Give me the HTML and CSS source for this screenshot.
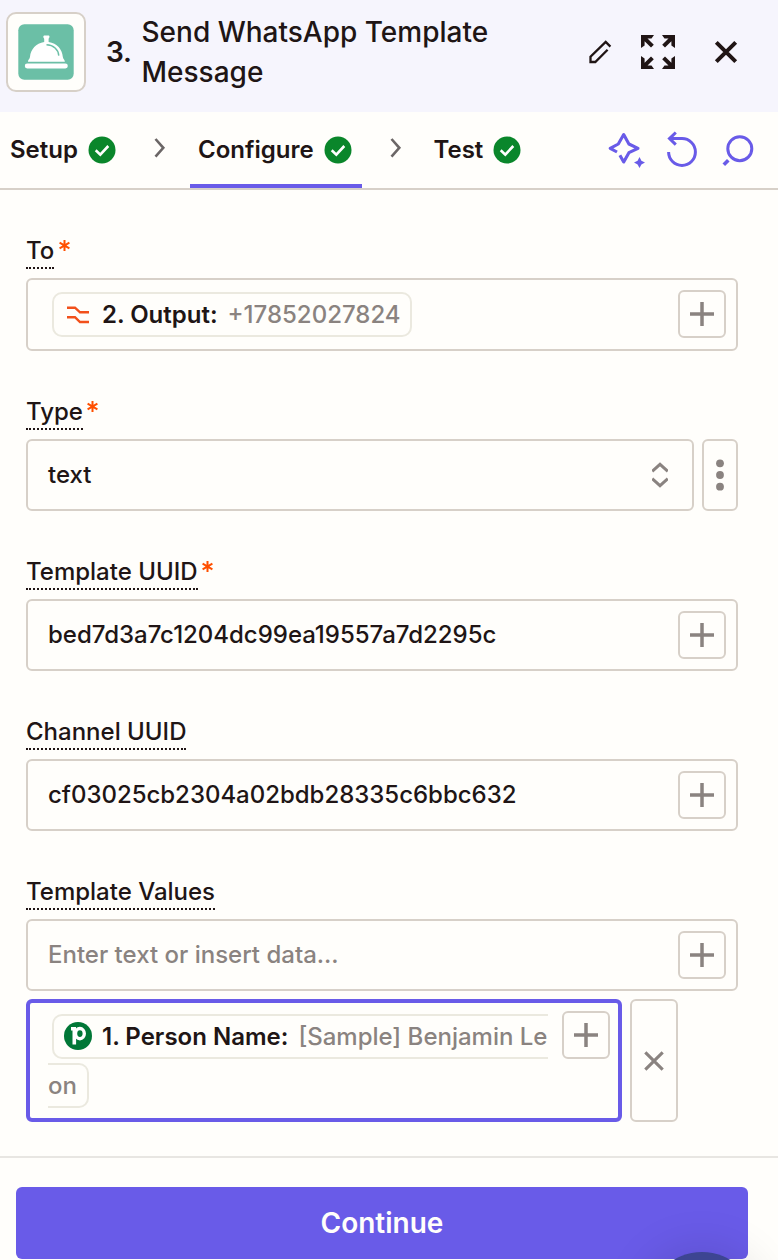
FILE: index.html
```html
<!DOCTYPE html>
<html lang="en">
<head>
<meta charset="utf-8">
<title>Send WhatsApp Template Message</title>
<link rel="stylesheet" href="styles.css">
</head>
<body>
<div class="panel">
  <header class="header">
    <div class="app-icon">
      <svg width="56" height="56" viewBox="0 0 56 56"><rect x="0.3" y="0.3" width="55.4" height="55.4" rx="6" fill="#6bbfa6"/><path fill="#fff" d="M25.300 12.800c0-.8.7-1.200 1.300-1.200h3.600c.8 0 1.300.5 1.300 1.200 0 1-.9 1.400-.9 2.200v3c8.500 1.200 13.600 7.500 14.200 14.800.2 2.300 1.900 2.700 2.100 5h-37c.2-2.300 1.900-2.700 2.100-5 .7-7.300 6-13.600 14.200-14.800v-3c0-.8-.9-1.200-.9-2.200z"/><path d="M28.500 20.800c7 .3 11.800 4.500 12.300 10.800" fill="none" stroke="#6bbfa6" stroke-width="1.500"/><rect x="6.800" y="39.600" width="43" height="4.800" rx="2.400" fill="#fff"/></svg>
    </div>
    <span class="step">3.</span>
    <h1 class="title">Send WhatsApp Template<br>Message</h1>
    <div class="header-actions">
      <svg width="24" height="24" viewBox="0 0 24 24" fill="none" stroke="#201515" stroke-width="2.300"><path d="M22.400 6.600 17.700 1.900 2.500 16.800V22H7.300L19.600 9.800"/></svg>
      <svg class="expand" width="36" height="36" viewBox="0 0 36 36" fill="#201515"><path d="M1 1H14L11.500 4.500H7.500L13.800 10.800 11 13.600 4.600 7.200V11.500L1 14Z"/><path transform="matrix(-1 0 0 1 36 0)" d="M1 1H14L11.500 4.500H7.500L13.800 10.800 11 13.600 4.600 7.200V11.500L1 14Z"/><path transform="matrix(1 0 0 -1 0 36)" d="M1 1H14L11.500 4.500H7.500L13.800 10.800 11 13.600 4.600 7.200V11.500L1 14Z"/><path transform="matrix(-1 0 0 -1 36 36)" d="M1 1H14L11.500 4.500H7.500L13.800 10.800 11 13.600 4.600 7.200V11.500L1 14Z"/></svg>
      <svg width="24" height="24" viewBox="0 0 24 24" fill="none" stroke="#201515" stroke-width="4"><path d="M2.300 2.300 21.700 21.700M21.700 2.300 2.300 21.700"/></svg>
    </div>
  </header>

  <nav class="tabs">
    <div class="tab setup"><span>Setup</span><svg width="28" height="28" viewBox="0 0 28 28"><circle cx="14" cy="14" r="13.500" fill="#0a862b"/><path d="M7.700 14.200 12.300 18.600 20.300 10" fill="none" stroke="#fff" stroke-width="2.600"/></svg></div>
    <svg class="chevron" width="12" height="20" viewBox="0 0 12 20"><path d="M1.500 1 9.300 9.800 1.500 18.600" fill="none" stroke="#6b6666" stroke-width="2.600"/></svg>
    <div class="tab active"><span>Configure</span><svg width="28" height="28" viewBox="0 0 28 28"><circle cx="14" cy="14" r="13.500" fill="#0a862b"/><path d="M7.700 14.200 12.300 18.600 20.300 10" fill="none" stroke="#fff" stroke-width="2.600"/></svg></div>
    <svg class="chevron" width="12" height="20" viewBox="0 0 12 20"><path d="M1.500 1 9.300 9.800 1.500 18.600" fill="none" stroke="#6b6666" stroke-width="2.600"/></svg>
    <div class="tab test"><span>Test</span><svg width="28" height="28" viewBox="0 0 28 28"><circle cx="14" cy="14" r="13.500" fill="#0a862b"/><path d="M7.700 14.200 12.300 18.600 20.300 10" fill="none" stroke="#fff" stroke-width="2.600"/></svg></div>
    <div class="tab-actions">
      <svg width="37" height="36" viewBox="0 0 37 36"><path d="M9 20 2.200 16.300 10.300 12 15.700 2.600 20.900 12 30 16.300 20.900 20.700 15.700 30 11.900 23.200" fill="none" stroke="#695be8" stroke-width="3.100" stroke-linejoin="round"/><path d="M31.500 25 33.400 28.700 37 30.600 33.400 32.400 31.500 36 29.600 32.400 26 30.600 29.600 28.700Z" fill="#695be8"/></svg>
      <svg class="undo" width="32" height="36" viewBox="0 0 32 36" fill="none" stroke="#695be8" stroke-width="3"><path d="M3.500 7.600H16A13.400 13.400 0 1 1 2.600 21"/><path d="M9.800 1.500 3.500 7.600 9.800 13.700"/></svg>
      <svg class="search" width="32" height="32" viewBox="0 0 32 32" fill="none" stroke="#695be8" stroke-width="3"><circle cx="17.800" cy="13.700" r="12"/><path d="M6.300 25.200 1.800 29.700" stroke-width="3.600"/></svg>
    </div>
  </nav>

  <main class="form">
    <section class="field">
      <div class="label-row"><label class="label">To</label><svg class="required" width="11" height="11" viewBox="0 0 11 11"><path d="M5.500 0V11M.6 2.700 10.400 8.300M10.400 2.700.6 8.300" stroke="#ff4f00" stroke-width="2"/></svg></div>
      <div class="box box-tall">
        <div class="pill pill-phone">
          <svg class="format" width="22" height="18" viewBox="0 0 22 18" fill="none" stroke="#f2501b" stroke-width="2.400"><path d="M0 1.700H8L13 6.300H22M0 11.200H8L13 16H22"/></svg>
          <b class="p-out">2. Output:</b><span>+17852027824</span>
        </div>
        <button class="add"><svg width="24" height="24" viewBox="0 0 24 24"><path d="M12 0V24M0 12H24" stroke="#8a8380" stroke-width="3.500"/></svg></button>
      </div>
    </section>

    <section class="field">
      <div class="label-row"><label class="label">Type</label><svg class="required" width="11" height="11" viewBox="0 0 11 11"><path d="M5.500 0V11M.6 2.700 10.400 8.300M10.400 2.700.6 8.300" stroke="#ff4f00" stroke-width="2"/></svg></div>
      <div class="row">
        <div class="box select"><span class="value">text</span>
          <svg width="16" height="26" viewBox="0 0 16 26" fill="none" stroke="#8a8380" stroke-width="2.900"><path d="M.2 9.300 8 2.300 15.800 9.300M.2 16.700 8 23.700 15.800 16.700"/></svg>
        </div>
        <button class="menu"><svg width="8" height="32" viewBox="0 0 8 32" fill="#8a8380"><circle cx="4" cy="4.300" r="3.900"/><circle cx="4" cy="16" r="3.900"/><circle cx="4" cy="27.700" r="3.900"/></svg></button>
      </div>
    </section>

    <section class="field">
      <div class="label-row"><label class="label">Template UUID</label><svg class="required" width="11" height="11" viewBox="0 0 11 11"><path d="M5.500 0V11M.6 2.700 10.400 8.300M10.400 2.700.6 8.300" stroke="#ff4f00" stroke-width="2"/></svg></div>
      <div class="box"><span class="value uuid">bed7d3a7c1204dc99ea19557a7d2295c</span>
        <button class="add"><svg width="24" height="24" viewBox="0 0 24 24"><path d="M12 0V24M0 12H24" stroke="#8a8380" stroke-width="3.500"/></svg></button></div>
    </section>

    <section class="field">
      <div class="label-row"><label class="label">Channel UUID</label></div>
      <div class="box"><span class="value uuid">cf03025cb2304a02bdb28335c6bbc632</span>
        <button class="add"><svg width="24" height="24" viewBox="0 0 24 24"><path d="M12 0V24M0 12H24" stroke="#8a8380" stroke-width="3.500"/></svg></button></div>
    </section>

    <section class="field">
      <div class="label-row"><label class="label">Template Values</label></div>
      <div class="box"><span class="value placeholder">Enter text or insert data...</span>
        <button class="add"><svg width="24" height="24" viewBox="0 0 24 24"><path d="M12 0V24M0 12H24" stroke="#8a8380" stroke-width="3.500"/></svg></button></div>
      <div class="row entry">
        <div class="box focused">
          <div class="lines">
            <div class="pill pill-start">
              <svg class="person" width="28" height="28" viewBox="0 0 28 28"><circle cx="14" cy="14" r="14" fill="#017737"/><path d="M7 6.800H10.300V22.500" fill="none" stroke="#fff" stroke-width="3.600"/><ellipse cx="15.900" cy="11.600" rx="4.400" ry="5.100" fill="none" stroke="#fff" stroke-width="3.400"/></svg>
              <b class="p-person">1. Person Name:</b><span>[Sample] Benjamin Le</span>
            </div>
            <div class="pill pill-end"><span>on</span></div>
          </div>
          <button class="add"><svg width="24" height="24" viewBox="0 0 24 24"><path d="M12 0V24M0 12H24" stroke="#8a8380" stroke-width="3.500"/></svg></button>
        </div>
        <button class="remove"><svg width="20" height="20" viewBox="0 0 20 20"><path d="M1.300 1.300 18.700 18.700M18.700 1.300 1.300 18.700" stroke="#8a8380" stroke-width="3.100"/></svg></button>
      </div>
    </section>
  </main>

  <footer class="footer">
    <button class="continue">Continue</button>
    <div class="launcher"></div>
  </footer>
</div>
</body>
</html>
```
FILE: styles.css
```css
* { box-sizing: border-box; }
body { margin: 0; background: #fffefb; color: #201515; font: 500 24px/25px Inter, sans-serif; }
button { margin: 0; padding: 0; font: inherit; background: #fffefb; border: 2px solid #d7d0c8; border-radius: 6px; display: flex; align-items: center; justify-content: center; flex: none; }
svg { display: block; flex: none; }
.panel { width: 778px; height: 1260px; overflow: hidden; position: relative; display: flex; flex-direction: column; }

.header { height: 112px; flex: none; background: #f6f5fd; display: flex; align-items: center; padding: 0 40px 8px 6px; }
.app-icon { width: 80px; height: 80px; border: 2px solid #d7d0c8; border-radius: 10px; background: #fffefb; display: flex; align-items: center; justify-content: center; }
.step { margin-left: 20px; width: 35.500px; font-size: 28px; font-weight: 600; letter-spacing: -.3px; }
.title { margin: 0; font-size: 28px; line-height: 40px; font-weight: 500; white-space: nowrap; }
.header-actions { margin-left: auto; display: flex; align-items: center; gap: 28px; }
.header-actions svg:last-child { margin-left: 10px; }

.tabs { height: 78px; flex: none; border-bottom: 2px solid #d7d0c8; display: flex; align-items: center; padding: 0 24px 0 2px; font-weight: 600; }
.tab { height: 76px; display: flex; align-items: center; justify-content: space-between; padding: 4px 10px 0 8px; border-bottom: 4px solid transparent; }
.tab span { padding-bottom: 2px; }
.setup { width: 124px; }
.active { width: 172px; border-color: #695be8; }
.test { width: 105px; margin-left: -.5px; }
.chevron { margin: 0 24px 4px 28px; }
.tab-actions { margin-left: auto; display: flex; align-items: center; }
.undo { margin: 0 24px 2px 21px; }
.search { margin-top: 1px; }

.form { padding: 0 40px 0 26px; }
.field { margin-top: 48px; }
.label-row { display: flex; align-items: flex-start; height: 40px; }
.label { height: 31px; padding-bottom: 4px; border-bottom: 2px dotted #201515; white-space: nowrap; }
.required { margin: 2px 0 0 4.500px; }
.box { height: 72px; flex: 1; border: 2px solid #d7d0c8; border-radius: 6px; display: flex; align-items: center; justify-content: space-between; padding: 0 10px 0 20px; background: #fffefb; }
.box-tall { height: 73px; padding-left: 24px; }
.box-tall .add { margin-bottom: 1px; }
.value { white-space: nowrap; padding-bottom: 1px; }
.uuid { letter-spacing: -.02px; }
.placeholder { color: #8a8380; }
.row { display: flex; gap: 8px; }
.select { padding-right: 24px; }
.menu { width: 36px; height: 72px; }
.add { width: 48px; height: 48px; }
.pill { height: 45px; border: 2px solid #ebe9df; border-radius: 10px; display: flex; align-items: center; white-space: nowrap; color: #8a8380; padding: 0 10px 0 13px; }
.pill-phone { width: 360px; }
.pill b { font-weight: 600; color: #201515; }
.format { margin-right: 13px; }
.p-out { margin-right: 10px; }
.entry { margin-top: 8px; width: 652px; height: 123px; }
.focused { height: 123px; border: 4px solid #695be8; align-items: flex-start; padding: 8px 8px 0 18px; }
.lines { width: 500px; padding-top: 3px; display: flex; flex-direction: column; align-items: flex-start; gap: 4px; }
.pill-start { margin-left: 4px; width: 496px; border-right: 0; border-radius: 10px 0 0 10px; padding: 0 0 0 10px; }
.pill-end { border-left: 0; border-radius: 0 10px 10px 0; padding: 0 10px 0 0; }
.person { margin: 0 10px 1px 0; }
.p-person { margin-right: 10px; }
.remove { width: 48px; height: 123px; }

.footer { margin-top: 34px; border-top: 2px solid #e8e6e2; height: 104px; padding: 29px 30px 0 16px; }
.continue { width: 732px; height: 72px; border: 0; background: #695be8; color: #fffefb; font-size: 28px; font-weight: 600; }
.launcher { position: absolute; left: 648px; top: 1252px; width: 108px; height: 108px; border-radius: 50%; background: #3d4592; box-shadow: 0 2px 50px rgba(0,0,0,.16); }
```
